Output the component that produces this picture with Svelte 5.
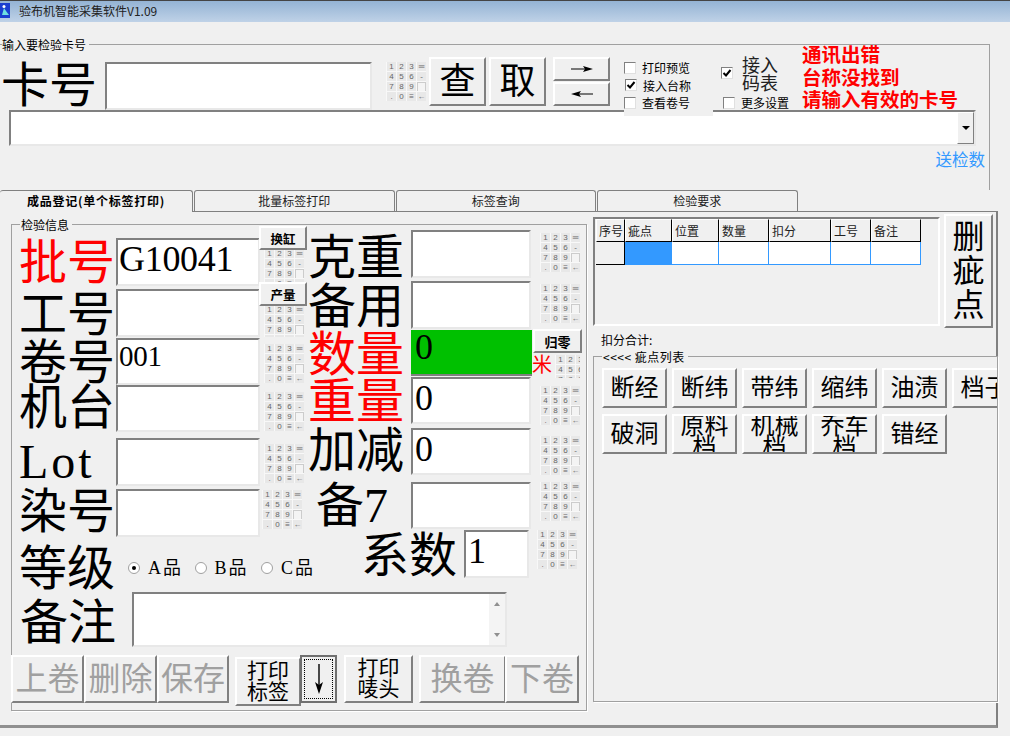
<script>
  const keys = ["1", "2", "3", "═", "4", "5", "6", "-", "7", "8", "9", "", ".", "0", "≡", "←"];

  const leftRows = [
    { label: "批号", red: true, value: "G10041", pitch: 51, h: 48, lt: 1, kt: 11 },
    { label: "工号", pitch: 49, h: 48, lt: 2, kt: 16, kh: 32 },
    { label: "卷号", value: "001", small: true, pitch: 47, h: 47, lt: 1, kt: 6 },
    { label: "机台", pitch: 53, h: 47, lt: -1, kt: 7 },
    { label: "Lot", latin: true, pitch: 51, h: 48, lt: 0, kt: 6 },
    { label: "染号", pitch: 56, h: 48, lt: -1, kt: 1, kx: 2 }
  ];

  const midRows = [
    { label: "克重", pitch: 51, h: 48, lt: 4, kt: 3 },
    { label: "备用", pitch: 49, h: 48, lt: 2, kt: 3 },
    { label: "数量", red: true, value: "0", green: true, pitch: 47, h: 46, lt: 1, meter: true },
    { label: "重量", red: true, value: "0", pitch: 51, h: 47, lt: 1, kt: 9 },
    { label: "加减", value: "0", pitch: 54, h: 47, lt: -1, kt: 8 },
    { label: "备7", cls: "spare", pitch: 48, h: 47, lt: 0, kt: 0 },
    { label: "系数", cls: "ratio", value: "1", pitch: 48, h: 48, lt: 2, kt: 0 }
  ];

  const columns = [
    ["序号", 29], ["疵点", 47], ["位置", 47], ["数量", 50], ["扣分", 62], ["工号", 40], ["备注", 50]
  ];

  const defects = ["断经", "断纬", "带纬", "缩纬", "油渍", "档子", "破洞", "原料档", "机械档", "乔车档", "错经"];
</script>

{#snippet keypad(top = 0, left = 0, height = 39)}
  <div class="keypad" style="margin-top:{top}px;margin-left:{left}px;height:{height}px">
    {#each keys as key, i}
      <span class:tall={i === 11} class="key">{key}</span>
    {/each}
  </div>
{/snippet}

{#snippet check(text, checked = false)}
  <span class="box">
    {#if checked}
      <svg viewBox="0 0 10 10" width="10" height="10"><path d="M1.5 5 L4 7.5 L8.5 2" fill="none" stroke="#000" stroke-width="2" /></svg>
    {/if}
  </span>
  {#if text}<span>{text}</span>{/if}
{/snippet}

<div class="window">
  <header class="title">
    <svg class="app-icon" viewBox="0 0 10 15" width="10" height="15">
      <rect width="10" height="15" fill="#1c3fd0" />
      <path d="M2 12 L4 5 L6 8 L9 12 Z" fill="#6fe0e0" />
      <circle cx="4" cy="3.5" r="1.5" fill="#fff" />
    </svg>
    <span>验布机智能采集软件V1.09</span>
  </header>

  <section class="top">
    <span class="legend top-legend">输入要检验卡号</span>
    <div class="card-row">
      <span class="big card-label">卡号</span>
      <div class="field card-input"></div>
      <div class="card-keypad">{@render keypad()}</div>
      <button class="btn card-btn first">查</button>
      <button class="btn card-btn">取</button>
      <div class="arrows">
        <button class="btn">
          <svg viewBox="0 0 22 8" width="22" height="8"><path d="M0 4 H16" stroke="#000" /><path d="M12 1 L22 4 L12 7 L14 4 Z" /></svg>
        </button>
        <button class="btn">
          <svg viewBox="0 0 22 8" width="22" height="8"><path d="M6 4 H22" stroke="#000" /><path d="M10 1 L0 4 L10 7 L8 4 Z" /></svg>
        </button>
      </div>
      <div class="options">
        <label class="opt">{@render check("打印预览")}</label>
        <label class="opt nudge">{@render check("接入台称", true)}</label>
        <label class="opt">{@render check("查看卷号")}</label>
      </div>
      <div class="code-table">
        <label class="code-opt">
          {@render check("", true)}
          <span class="code-text">接入<br />码表</span>
        </label>
        <label class="opt more">{@render check("更多设置")}</label>
      </div>
      <div class="messages">
        <div>通讯出错</div>
        <div>台称没找到</div>
        <div>请输入有效的卡号</div>
      </div>
    </div>
    <div class="field combo">
      <span class="drop"><i></i></span>
    </div>
    <div class="send">送检数</div>
  </section>

  <nav class="tabs">
    <span class="tab active">成品登记(单个标签打印)</span>
    <span class="tab">批量标签打印</span>
    <span class="tab">标签查询</span>
    <span class="tab">检验要求</span>
  </nav>

  <main class="page">
    <section class="group info">
      <span class="legend info-legend">检验信息</span>
      <div class="info-cols">
        <div class="left-col">
          {#each leftRows as row, i}
            <div class="row" style="height:{row.pitch}px">
              <span class="big label" class:red={row.red} class:latin={row.latin} style="margin-top:{row.lt}px">{row.label}</span>
              <div class="field value" class:small={row.small} style="height:{row.h}px">{row.value ?? ""}</div>
              {@render keypad(row.kt, 4 - (row.kx ?? 0), row.kh ?? 39)}
              {#if i === 0}
                <button class="btn mini over-a">换缸</button>
              {:else if i === 1}
                <button class="btn mini over-b">产量</button>
              {/if}
            </div>
          {/each}
          <div class="grade">
            <span class="big label">等级</span>
            <div class="radios">
              <label class="radio"><span class="dot on"></span><span>A品</span></label>
              <label class="radio"><span class="dot"></span><span>B品</span></label>
              <label class="radio"><span class="dot"></span><span>C品</span></label>
            </div>
          </div>
        </div>

        <div class="mid-col">
          {#each midRows as row}
            <div class="row {row.cls ?? ''}" style="height:{row.pitch}px">
              <span class="big mid-label" class:red={row.red} style="margin-top:{row.lt}px">{row.label}</span>
              <div class="field value mid-value" class:green={row.green} style="height:{row.h}px">{row.value ?? ""}</div>
              {#if row.meter}
                <button class="btn zero">归零</button>
                <span class="meter">米</span>
                <div class="clip-keypad">{@render keypad()}</div>
              {:else}
                <div class="mid-keypad">{@render keypad(row.kt)}</div>
              {/if}
            </div>
          {/each}
        </div>
      </div>

      <div class="note-row">
        <span class="big label note-label">备注</span>
        <div class="field note">
          <span class="scroll"><i class="up"></i><i class="down"></i></span>
        </div>
      </div>

      <div class="actions">
        <button class="btn act off w73">上卷</button>
        <button class="btn act off w73">删除</button>
        <button class="btn act off w72">保存</button>
        <button class="btn act print">打印<br />标签</button>
        <button class="btn act arrow-btn">
          <span class="focus">
            <svg viewBox="0 0 10 30" width="10" height="30"><path d="M5 0 V24" stroke="#000" stroke-width="1.4" /><path d="M1 18 L5 30 L9 18 L5 21 Z" /></svg>
          </span>
        </button>
        <button class="btn act print mark">打印<br />唛头</button>
        <button class="btn act off swap">换卷</button>
        <button class="btn act off next">下卷</button>
      </div>
    </section>

    <div class="right-col">
      <div class="right-top">
        <div class="table-wrap">
          <div class="table-head">
            {#each columns as [name, width]}
              <span class="th" style="width:{width}px">{name}</span>
            {/each}
          </div>
          <div class="table-row">
            {#each columns as [name, width], i}
              <span class="td" class:corner={i === 0} class:selected={i === 1} style="width:{width}px"></span>
            {/each}
          </div>
        </div>
        <button class="btn delete">删<br />疵<br />点</button>
      </div>
      <div class="total">扣分合计:</div>
      <section class="group defects">
        <span class="legend defects-legend">&lt;&lt;&lt;&lt; 疵点列表</span>
        <div class="defect-grid">
          {#each defects as name}
            <button class="btn defect" class:wrap={name.length > 2}>{name}</button>
          {/each}
        </div>
      </section>
    </div>
  </main>
</div>

<style>
  :global(body) {
    margin: 0;
    background: #f0f0f0;
  }

  * {
    box-sizing: border-box;
  }

  .window {
    width: 1010px;
    height: 736px;
    overflow: hidden;
    background: #f0f0f0;
    color: #000;
    font-family: "Liberation Serif", "Noto Sans CJK SC", serif;
    font-size: 12px;
  }

  .title {
    display: flex;
    align-items: center;
    gap: 9px;
    height: 22px;
    padding-bottom: 2px;
    border-top: 1px solid #444;
    background: linear-gradient(#94b3d4, #bfd2e7);
    font-family: "Noto Sans CJK SC", sans-serif;
    color: #222;
  }

  .btn {
    display: block;
    margin: 0;
    padding: 0;
    border: 2px solid;
    border-color: #fff #808080 #808080 #fff;
    background: #f0f0f0;
    color: #000;
    font-family: "Liberation Serif", "Noto Sans CJK SC", serif;
  }

  .field {
    border: 2px solid;
    border-color: #808080 #e8e8e8 #e8e8e8 #808080;
    background: #fff;
  }

  .legend {
    position: absolute;
    background: #f0f0f0;
    font-family: "Noto Sans CJK SC", sans-serif;
    font-size: 12px;
    line-height: 14px;
    padding-right: 3px;
  }

  .big {
    font-size: 48px;
    line-height: 48px;
    font-weight: 400;
    white-space: nowrap;
  }

  .red {
    color: #f00;
  }

  /* keypad bitmap */
  .keypad {
    display: grid;
    flex: none;
    grid-template-columns: repeat(4, 9px);
    grid-auto-rows: 9px;
    gap: 1px;
    width: 40px;
    padding: 0 0 0 1px;
    overflow: hidden;
    background: #f8f8f8;
  }

  .key {
    background: #e8e8e8;
    color: #666;
    font: 8px/9px "Liberation Sans", sans-serif;
    text-align: center;
  }

  .key.tall {
    background: #f4f4f4;
    border: 1px solid #ccc;
    border-bottom: 0;
  }

  /* top group */
  .top {
    position: relative;
    width: 990px;
    height: 168px;
    margin-top: 0;
    padding-top: 23px;
  }

  .top::before {
    content: "";
    position: absolute;
    top: 22px;
    left: 0;
    right: 0;
    bottom: 0;
    border-top: 1px solid #a0a0a0;
    border-right: 1px solid #a0a0a0;
  }

  .top-legend {
    top: 16px;
    left: 2px;
    z-index: 1;
  }

  .card-row {
    position: relative;
    display: flex;
    align-items: flex-start;
    height: 65px;
    padding-left: 1px;
  }

  .card-label {
    width: 104px;
    margin-top: 17px;
  }

  .card-input {
    width: 267px;
    height: 48px;
    margin-top: 17px;
  }

  .card-keypad {
    margin: 17px 3px 0 14px;
  }

  .card-btn {
    width: 57px;
    height: 49px;
    margin: 12px 3px 0 0;
    font-size: 36px;
    line-height: 40px;
  }

  .arrows {
    display: flex;
    flex-direction: column;
    gap: 1px;
    width: 57px;
    margin: 12px 14px 0 4px;
  }

  .arrows .btn {
    display: flex;
    align-items: center;
    justify-content: center;
    height: 24px;
  }

  .options {
    position: relative;
    z-index: 1;
    display: flex;
    flex-direction: column;
    width: 89px;
    height: 71px;
    margin-top: 0;
    padding-top: 14px;
    background: #f0f0f0;
  }

  .opt {
    display: flex;
    align-items: center;
    gap: 6px;
    height: 17.5px;
    font-family: "Noto Sans CJK SC", sans-serif;
  }

  .nudge {
    margin-left: 1px;
  }

  .box {
    display: flex;
    flex: none;
    align-items: center;
    justify-content: center;
    width: 12px;
    height: 12px;
    border: 1px solid;
    border-color: #808080 #e0e0e0 #e0e0e0 #808080;
    background: #fff;
  }

  .code-table {
    width: 81px;
    margin-left: 8px;
    padding-top: 9px;
  }

  .code-opt {
    display: flex;
    align-items: center;
    gap: 9px;
    height: 38px;
  }

  .code-text {
    font-family: "Noto Sans CJK SC", sans-serif;
    font-size: 18px;
    line-height: 18px;
    color: #222;
  }

  .more {
    gap: 6px;
    margin: 2px 0 0 2px;
  }

  .messages {
    margin-top: -2px;
    color: #f00;
    font-family: "Noto Sans CJK SC", sans-serif;
    font-size: 19.5px;
    font-weight: 700;
    line-height: 22.5px;
    white-space: nowrap;
  }

  .combo {
    position: relative;
    width: 967px;
    height: 36px;
    margin-left: 9px;
  }

  .drop {
    position: absolute;
    top: 0;
    right: 0;
    display: flex;
    align-items: center;
    justify-content: center;
    width: 17px;
    height: 32px;
    border: 1px solid;
    border-color: #fff #808080 #808080 #fff;
    background: #f0f0f0;
  }

  .drop i {
    border: 4px solid transparent;
    border-top: 4px solid #000;
    border-bottom: 0;
  }

  .send {
    position: relative;
    width: 985px;
    margin-top: 3px;
    color: #3399ff;
    font-family: "Noto Sans CJK SC", sans-serif;
    font-size: 16.5px;
    line-height: 20px;
    text-align: right;
  }

  /* tabs */
  .tabs {
    position: relative;
    z-index: 1;
    display: flex;
    height: 21px;
    gap: 1px;
  }

  .tab {
    width: 200.5px;
    height: 21px;
    border: 1px solid #808080;
    border-bottom: 0;
    border-radius: 3px 3px 0 0;
    font-family: "Noto Sans CJK SC", sans-serif;
    line-height: 19px;
    text-align: center;
    color: #222;
  }

  .tab.active {
    width: 193px;
    height: 22px;
    border-left: 0;
    background: #f0f0f0;
    font-weight: 700;
    letter-spacing: 0.75px;
    color: #000;
  }

  .page {
    display: flex;
    align-items: flex-start;
    width: 998px;
    height: 517px;
    border-top: 1px solid #808080;
    border-right: 2px solid #808080;
    border-bottom: 3px solid #909090;
  }

  .group {
    position: relative;
    border: 1px solid #a0a0a0;
    box-shadow: 1px 1px 0 #fff;
  }

  /* info group */
  .info {
    flex: none;
    width: 576px;
    height: 487px;
    margin: 12px 0 0 11px;
  }

  .info-legend {
    top: -7px;
    left: 8px;
    padding-left: 1px;
  }

  .info-cols {
    display: flex;
    height: 367px;
    padding-left: 7px;
  }

  .left-col {
    flex: none;
    width: 289px;
    padding-top: 13px;
  }

  .mid-col {
    flex: none;
    width: 270px;
    padding-top: 5px;
  }

  .row {
    position: relative;
    display: flex;
    align-items: flex-start;
  }

  .label {
    flex: none;
    width: 97px;
  }

  .latin {
    letter-spacing: 3px;
  }

  .value {
    flex: none;
    width: 144px;
    padding-left: 1px;
    overflow: hidden;
    font-size: 36px;
    line-height: 38px;
    letter-spacing: -0.3px;
  }

  .value.small {
    font-size: 29px;
    line-height: 32px;
  }

  .mini {
    position: absolute;
    z-index: 1;
    left: 240px;
    width: 48px;
    height: 24px;
    font-size: 12.5px;
    font-weight: 700;
  }

  .over-a {
    top: -12px;
  }

  .over-b {
    top: -7px;
  }

  .mid-label {
    flex: none;
    width: 103px;
  }

  .mid-value {
    width: 120px;
    padding-left: 2px;
  }

  .green {
    border: 0;
    border-bottom: 2px solid #808080;
    background: #00c000;
    padding-left: 4px;
    width: 121px;
    line-height: 34px;
  }

  .mid-keypad {
    margin-left: 9px;
  }

  .zero {
    position: absolute;
    z-index: 1;
    top: -1px;
    left: 225px;
    width: 49px;
    height: 24px;
    font-size: 13px;
    font-weight: 700;
  }

  .meter {
    position: absolute;
    top: 22px;
    left: 224px;
    color: #f00;
    font-family: "Noto Sans CJK SC", sans-serif;
    font-size: 20px;
    line-height: 24px;
  }

  .clip-keypad {
    position: absolute;
    top: 25px;
    left: 247px;
    width: 25px;
    height: 23px;
    overflow: hidden;
  }

  .spare .mid-label {
    padding-left: 8px;
  }

  .spare .mid-keypad,
  .ratio .mid-keypad {
    margin-top: 0;
  }

  .ratio .mid-label {
    width: 156px;
    padding-left: 53px;
  }

  .ratio .mid-value {
    width: 65px;
  }

  .ratio .mid-keypad {
    margin-left: 8px;
  }

  .grade {
    display: flex;
    align-items: flex-start;
  }

  .radios {
    display: flex;
    margin-top: 12px;
    padding-left: 12px;
  }

  .radio {
    display: flex;
    flex: none;
    align-items: center;
    gap: 8px;
    width: 66.5px;
    font-size: 18px;
    line-height: 22px;
    letter-spacing: 2px;
    white-space: nowrap;
  }

  .dot {
    display: flex;
    flex: none;
    align-items: center;
    justify-content: center;
    width: 12px;
    height: 12px;
    border: 1px solid #a0a0a0;
    border-radius: 50%;
    background: #fff;
  }

  .dot.on::after {
    content: "";
    width: 4px;
    height: 4px;
    border-radius: 50%;
    background: #000;
  }

  .note-row {
    display: flex;
    align-items: flex-start;
    padding-left: 8px;
  }

  .note-label {
    width: 112px;
    margin-top: 7px;
  }

  .note {
    position: relative;
    width: 375px;
    height: 55px;
  }

  .scroll {
    position: absolute;
    top: 0;
    right: 0;
    bottom: 0;
    display: flex;
    flex-direction: column;
    align-items: center;
    justify-content: space-between;
    width: 16px;
    padding: 8px 0;
    background: #f4f4f4;
  }

  .up,
  .down {
    border: 3px solid transparent;
  }

  .up {
    border-bottom: 4px solid #909090;
    border-top: 0;
  }

  .down {
    border-top: 4px solid #909090;
    border-bottom: 0;
  }

  .actions {
    display: flex;
    align-items: flex-start;
    margin: 8px 0 0 -1px;
  }

  .act {
    height: 48px;
    font-size: 32px;
    line-height: 40px;
    flex: none;
  }

  .off {
    color: #a0a0a0;
  }

  .w73 {
    width: 73px;
  }

  .w72 {
    width: 72px;
  }

  .print {
    width: 66px;
    height: 49px;
    margin: 2px 0 0 6px;
    font-size: 21px;
    line-height: 21px;
  }

  .arrow-btn {
    width: 37px;
    margin-left: -1px;
    padding: 2px;
    border-color: #707070;
  }

  .focus {
    display: flex;
    align-items: center;
    justify-content: center;
    height: 100%;
    border: 1px dotted #000;
  }

  .mark {
    width: 69px;
    height: 48px;
    margin: 0 0 0 7px;
  }

  .swap {
    width: 87px;
    margin-left: 6px;
  }

  .next {
    width: 74px;
    margin-left: -1px;
  }

  /* right side */
  .right-col {
    flex: none;
    width: 405px;
    margin: 0 -1px 0 6px;
  }

  .right-top {
    display: flex;
    align-items: flex-start;
    gap: 4px;
    height: 121px;
    padding-top: 2px;
  }

  .table-wrap {
    width: 347px;
    height: 109px;
    margin-top: 3px;
    padding-left: 1px;
    border: 2px solid;
    border-color: #808080 #fff #fff #808080;
    font-family: "Noto Sans CJK SC", sans-serif;
  }

  .table-head,
  .table-row {
    display: flex;
    height: 23px;
  }

  .th {
    flex: none;
    border-top: 1px solid #fff;
    border-left: 1px solid #fff;
    border-right: 1px solid #000;
    border-bottom: 1px solid #000;
    padding-left: 2px;
    line-height: 21px;
    color: #222;
  }

  .td {
    flex: none;
    background: #fff;
    border-right: 1px solid #3399ff;
    border-bottom: 1px solid #3399ff;
  }

  .td.corner {
    background: #f0f0f0;
    border-color: #000;
  }

  .td.selected {
    background: #3399ff;
  }

  .delete {
    width: 49px;
    height: 114px;
    font-size: 32px;
    line-height: 34px;
  }

  .total {
    margin: -1px 0 0 8px;
    font-family: "Noto Sans CJK SC", sans-serif;
    line-height: 16px;
    height: 24px;
  }

  .defects {
    width: 405px;
    height: 346px;
    background: #f0f0f0;
    padding: 11px 0 0 8px;
    overflow: visible;
  }

  .defects-legend {
    top: -7px;
    left: 8px;
    padding-left: 1px;
    letter-spacing: 0.5px;
  }

  .defect-grid {
    display: grid;
    grid-template-columns: repeat(5, 65px) 45px;
    grid-auto-rows: 40px;
    gap: 6px 5px;
    overflow: hidden;
  }

  .defect {
    width: 65px;
    height: 40px;
    overflow: hidden;
    font-size: 24px;
    line-height: 36px;
  }

  .defect.wrap {
    padding: 0 6px;
    line-height: 21px;
  }
</style>
